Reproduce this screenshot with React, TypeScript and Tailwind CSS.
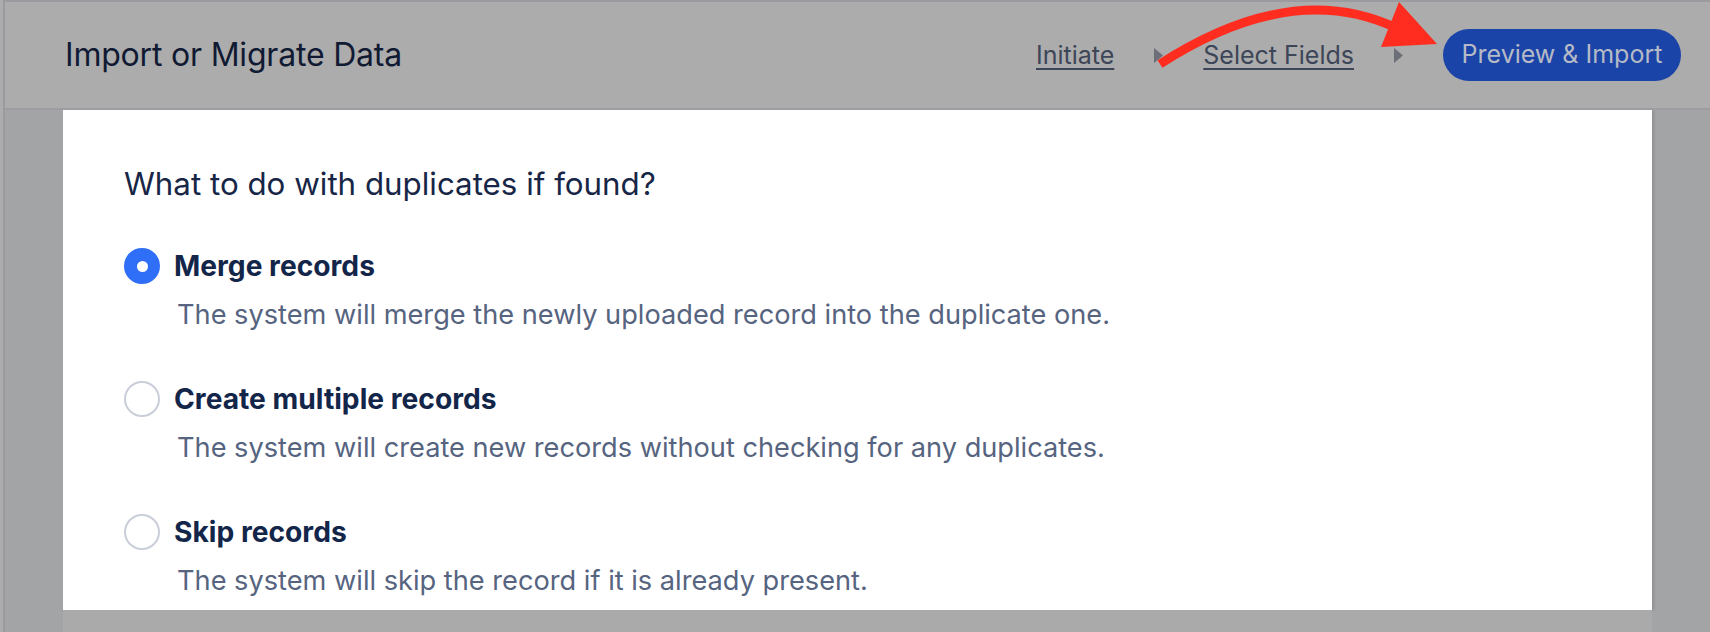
import React, { useState } from "react";

const options = [
  {
    id: "merge",
    label: "Merge records",
    desc: "The system will merge the newly uploaded record into the duplicate one.",
  },
  {
    id: "create",
    label: "Create multiple records",
    desc: "The system will create new records without checking for any duplicates.",
  },
  {
    id: "skip",
    label: "Skip records",
    desc: "The system will skip the record if it is already present.",
  },
];

function Caret() {
  return (
    <svg width="9" height="15" viewBox="0 0 9 15" className="shrink-0">
      <path d="M0 0 L9 7.5 L0 15 Z" fill="#6d6f78" />
    </svg>
  );
}

export default function App() {
  const [choice, setChoice] = useState("merge");

  return (
    <div className="w-[1710px] h-[632px] overflow-hidden bg-[#acacac] pl-[3px] font-['Inter',_'Noto_Sans',_sans-serif]">
      <div className="h-full flex flex-col border-l-2 border-t-2 border-[#9b9b9f]">
        {/* Header */}
        <header className="relative h-[108px] shrink-0 flex items-center justify-between border-b-2 border-[#9c9ca1] pl-[60px] pr-[29px]">
          <h1 className="text-[32px] leading-[40px] text-[#111a33] tracking-[-0.2px]">Import or Migrate Data</h1>

          <nav className="flex items-center gap-[40px]">
            <a className="text-[25px] leading-[32px] text-[#3d4558] underline underline-offset-[4px] decoration-[2px]">Initiate</a>
            <Caret />
            <a className="text-[25px] leading-[32px] text-[#3d4558] underline underline-offset-[4px] decoration-[2px]">Select Fields</a>
            <Caret />
            <button className="h-[52px] w-[238px] rounded-full bg-[#1a44a8] text-[25px] text-[#b5bac6]">
              Preview &amp; Import
            </button>
          </nav>

          {/* annotation arrow */}
          <svg className="absolute left-0 top-[-2px] pointer-events-none" width="1705" height="110" viewBox="5 0 1705 110">
            <path d="M1160 64 Q1292 -21 1396 28" fill="none" stroke="#ff2d20" strokeWidth="9" />
            <path d="M1399 2 L1437 44 L1381 47 Z" fill="#ff2d20" />
          </svg>
        </header>

        {/* Body */}
        <div className="flex-1 flex bg-[#a3a4a6] pl-[58px]">
          <div className="w-[1589px] flex flex-col">
            <section className="h-[500px] shrink-0 overflow-hidden bg-white pl-[61px] pt-[54px] shadow-[2px_0_3px_rgba(0,0,0,0.12)]">
              <h2 className="text-[31.3px] leading-[40px] text-[#172646]">What to do with duplicates if found?</h2>

              <div className="mt-[44px] flex flex-col gap-[48px]">
                {options.map((o) => {
                  const active = choice === o.id;
                  return (
                    <div key={o.id} onClick={() => setChoice(o.id)} className="cursor-pointer">
                      <div className="flex items-center gap-[14px]">
                        {active ? (
                          <span className="w-[36px] h-[36px] rounded-full bg-[#2f6ef6] flex items-center justify-center shrink-0">
                            <span className="w-[11px] h-[11px] rounded-full bg-white" />
                          </span>
                        ) : (
                          <span className="w-[36px] h-[36px] rounded-full border-2 border-[#c9ced8] bg-white shrink-0" />
                        )}
                        <span className="text-[28.2px] leading-[36px] font-bold text-[#13264a]">{o.label}</span>
                      </div>
                      <p className="mt-[13px] pl-[53px] text-[27.2px] leading-[36px] text-[#56647f]">{o.desc}</p>
                    </div>
                  );
                })}
              </div>
            </section>
            <div className="flex-1 bg-[#aaaaaa]" />
          </div>
        </div>
      </div>
    </div>
  );
}
